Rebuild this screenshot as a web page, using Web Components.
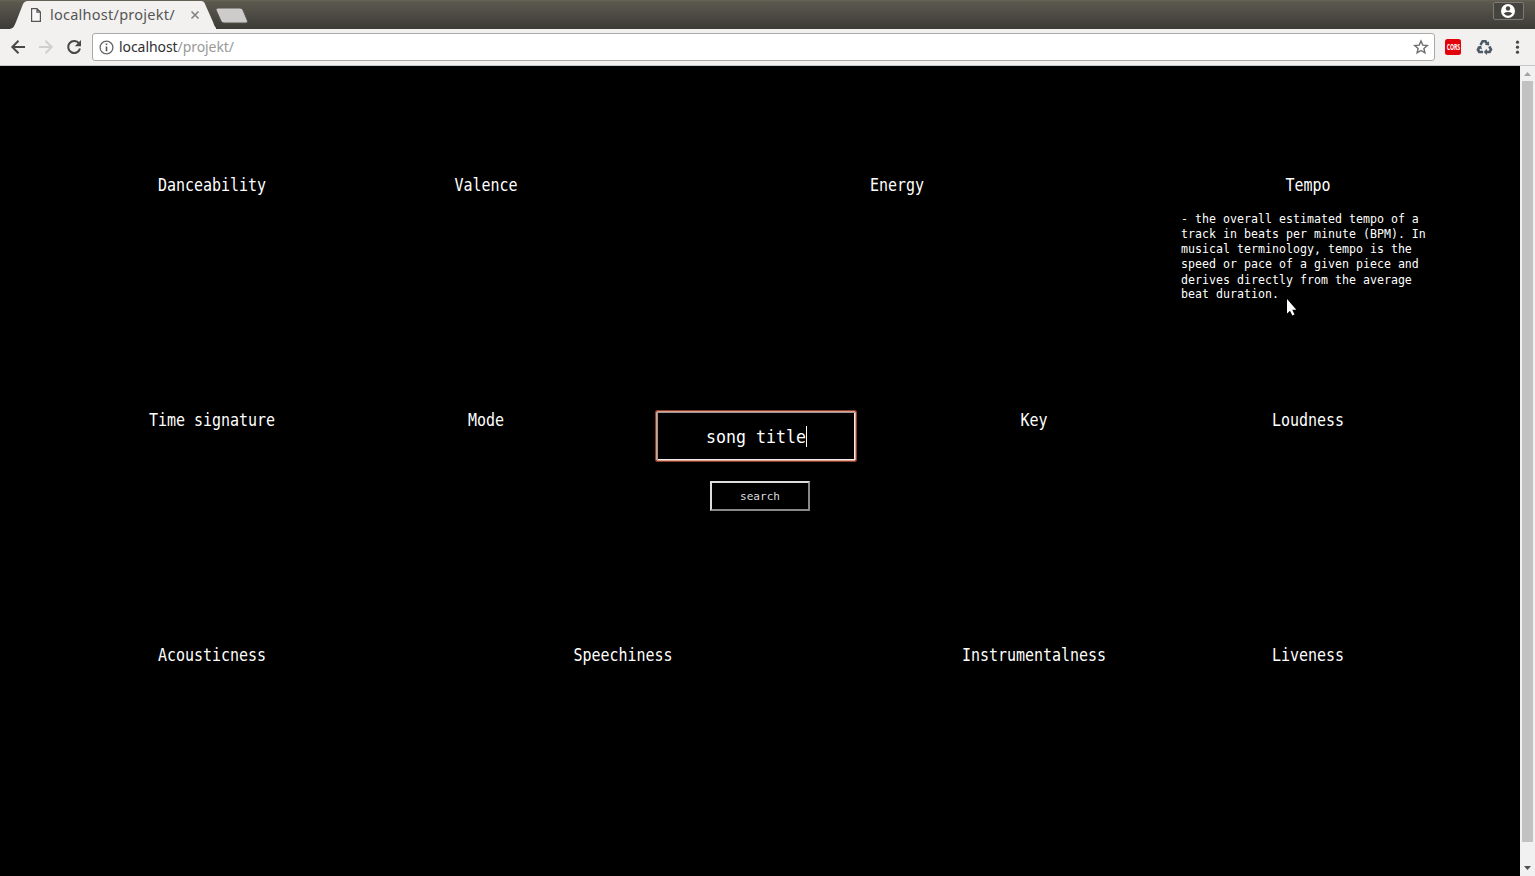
<!DOCTYPE html>
<html lang="en">
<head>
<meta charset="utf-8">
<title>localhost/projekt/</title>
<style>
html,body{margin:0;height:100%;overflow:hidden;background:#000}
</style>
</head>
<body>
<browser-window>
  <tab-strip slot="tabs"><browser-tab>localhost/projekt/</browser-tab></tab-strip>
  <address-bar slot="toolbar" host="localhost" path="/projekt/"></address-bar>
  <feature-grid>
    <track-feature>Danceability</track-feature>
    <track-feature>Valence</track-feature>
    <track-feature span="2">Energy</track-feature>
    <track-feature>Tempo<span slot="info">- the overall estimated tempo of a track in beats per minute (BPM). In musical terminology, tempo is the speed or pace of a given piece and derives directly from the average beat duration.</span></track-feature>
    <track-feature>Time signature</track-feature>
    <track-feature>Mode</track-feature>
    <song-search></song-search>
    <track-feature>Key</track-feature>
    <track-feature>Loudness</track-feature>
    <track-feature>Acousticness</track-feature>
    <track-feature span="2">Speechiness</track-feature>
    <track-feature>Instrumentalness</track-feature>
    <track-feature>Liveness</track-feature>
  </feature-grid>
</browser-window>
<mouse-pointer></mouse-pointer>
<script>
const define = (name, html, setup) => customElements.define(name, class extends HTMLElement {
  constructor() {
    super();
    this.attachShadow({mode: "open"}).innerHTML = html;
  }
  connectedCallback() { if (setup) setup(this, this.shadowRoot); }
});

define("browser-window", `<style>
:host{display:flex;flex-direction:column;height:876px;width:1535px;font-family:"Noto Sans",sans-serif}
.view{display:flex;flex:1;min-height:0;background:#000}
slot:not([name]){display:block;flex:1}
</style>
<slot name="tabs"></slot><slot name="toolbar"></slot>
<div class="view"><slot></slot><scroll-bar></scroll-bar></div>`);

define("tab-strip", `<style>
:host{display:flex;height:29px;background:linear-gradient(#676455 0,#5b584e 2px,#57544b 6px,#3d3c37 28px);align-items:flex-start}
.new{margin:8px 0 0 -1px}
.user{margin:2px 11px 0 auto;width:28px;padding-right:1px;height:16px;border:1px solid #7c7a72;border-radius:2px;background:#46443e;display:flex;justify-content:center;align-items:center}
svg{display:block}
</style>
<slot></slot>
<svg class="new" width="34" height="16"><path d="M3 0H25Q27 0 28 2L32.500 13Q33 15 31 15H9Q7 15 6 13L1 2Q.500 0 3 0Z" fill="#ceccca" stroke="#55534b"/></svg>
<div class="user"><svg width="16" height="14" viewBox="0 0 16 14"><circle cx="8" cy="7" r="7" fill="#fff"/><circle cx="8" cy="4.500" r="2.200" fill="#46443e"/><path d="M3.700 9.200Q8 6.700 12.300 9.200Q8 14.200 3.700 9.200" fill="#46443e"/></svg></div>`);

define("browser-tab", `<style>
:host{display:grid;width:216px;height:29px;flex:none}
.shape,.row{grid-area:1/1}
.row{display:flex;align-items:center;padding:1px 16px 0 31px}
.label{font-size:14.500px;line-height:20px;color:#555;margin:-2px 0 0 9px;width:125px;white-space:nowrap;letter-spacing:.25px}
.close{margin-left:auto}
</style>
<svg class="shape" width="216" height="29"><path d="M10 29C14 28 14 26 16 22L23 4Q24.500 1 28 1H201Q204 1 205 4L213 22C215 27 215 28 219 29Z" fill="#f2f1f0"/></svg>
<div class="row">
<svg width="10" height="14" viewBox="0 0 10 14"><path d="M.6 .6H6L9.400 4V13.400H.6ZM6 .6V4.200H9.400" fill="#f7f7f7" stroke="#555" stroke-width="1.200"/></svg>
<span class="label"><slot></slot></span>
<svg class="close" width="10" height="10"><path d="M1.500 1.500L8.500 8.500M8.500 1.500L1.500 8.500" stroke="#858585" stroke-width="1.700"/></svg>
</div>`);

define("address-bar", `<style>
:host{display:flex;align-items:center;height:36px;background:#f2f1f0;border-bottom:1px solid #c9c7c5;box-sizing:content-box}
svg{display:block;flex:none}
.nav{display:flex;align-items:center;gap:12px;padding-left:10px;width:92px;box-sizing:border-box;height:36px;flex:none}
.field{display:flex;align-items:center;box-sizing:border-box;width:1343px;height:28px;border:1px solid #aaa9a8;border-radius:3px;background:#fff;padding:0 5px 0 6px;flex:none}
.url{font-size:14px;line-height:20px;margin-left:5px;letter-spacing:-.07px;color:#303030;flex:1}
.path{color:#999}
.tools{display:flex;align-items:center;margin-left:10px}
.cors{width:16px;height:16px;border-radius:2.500px;background:#e2000b;color:#fff;display:flex;align-items:center;justify-content:center;font:bold 8px/16px "Open Sans",sans-serif}
.cors span{display:block;transform:scale(.64,1.05);letter-spacing:-.1px}
.re{margin-left:15px}.menu{margin-left:22px}
</style>
<div class="nav">
<svg width="16" height="16" viewBox="0 0 16 16"><path d="M15 8H2.500M8.500 1.800L2.300 8L8.500 14.200" fill="none" stroke="#484848" stroke-width="2"/></svg>
<svg width="16" height="16" viewBox="0 0 16 16"><path d="M1 8H13.500M7.500 1.800L13.700 8L7.500 14.200" fill="none" stroke="#d0cfce" stroke-width="2"/></svg>
<svg width="16" height="16" viewBox="0 0 16 16"><path d="M13.100 4.500A6 6 0 1 0 14 9.500" fill="none" stroke="#484848" stroke-width="2"/><path d="M15 1V7.200H8.800Z" fill="#484848"/></svg>
</div>
<div class="field">
<svg width="15" height="15" viewBox="0 0 15 15"><circle cx="7.500" cy="7.500" r="6.400" fill="none" stroke="#666" stroke-width="1.300"/><path d="M7.500 3.500V5.100M7.500 6.400V11.300" stroke="#555" stroke-width="1.600"/></svg>
<span class="url"><span class="host"></span><span class="path"></span></span>
<svg width="16" height="16" viewBox="0 0 16 16"><path d="M8 2L9.800 6.100L14.300 6.500L10.900 9.400L11.900 13.800L8 11.500L4.100 13.800L5.100 9.400L1.700 6.500L6.200 6.100Z" fill="none" stroke="#6c6c6c" stroke-width="1.400"/></svg>
</div>
<div class="tools">
<div class="cors"><span>CORS</span></div>
<svg class="re" width="17" height="16" viewBox="0 0 17 16"><g fill="none" stroke="#4d5966" stroke-width="2.600"><path d="M4.500 5.800L6.600 2.200H9.500L11 4.600"/><path d="M13.300 7.500L15 10.600L13.600 13H10.500"/><path d="M7 13H3.200L1.900 10.700L3.600 8"/></g><path d="M8.800 5.700L13.200 6.400L13 2.300ZM11 9.800V16L7.700 13ZM1 8.100L5.100 6.400L6 10.600Z" fill="#4d5966"/></svg>
<svg class="menu" width="5" height="14"><g fill="#484848"><circle cx="2.500" cy="2.200" r="1.600"/><circle cx="2.500" cy="7.200" r="1.600"/><circle cx="2.500" cy="12.200" r="1.600"/></g></svg>
</div>`, (el, root) => {
  root.querySelector(".host").textContent = el.getAttribute("host");
  root.querySelector(".path").textContent = el.getAttribute("path");
});

define("scroll-bar", `<style>
:host{display:flex;flex-direction:column;align-items:center;width:15px;background:#f1f1f1}
svg{display:block;flex:none}
.thumb{width:11px;height:761px;background:#c1c1c1}
</style>
<svg width="15" height="15"><path d="M4 10L7.500 6L11 10Z" fill="#a3a3a3"/></svg>
<div class="thumb"></div>
<svg width="15" height="34"><path d="M4 24H11L7.500 28Z" fill="#505050"/></svg>`);

define("feature-grid", `<style>
:host{display:grid;grid-template-columns:repeat(5,274px);grid-auto-rows:235px;padding:105px 75px 0;box-sizing:border-box;width:1520px;color:#fff;font-family:"DejaVu Sans Mono",monospace}
</style><slot></slot>`);

define("track-feature", `<style>
:host{display:block;text-align:center}
:host([span="2"]){grid-column:span 2}
h2{font-size:15px;font-weight:400;letter-spacing:-.03px;line-height:28px;margin:0;transform:scaleY(1.12)}
p{font-size:11.600px;line-height:13.636px;letter-spacing:.016px;margin:13px auto 0;width:254px;text-align:left;transform:scaleY(1.1);transform-origin:0 0}
</style><h2><slot></slot></h2><p><slot name="info"></slot></p>`);

define("song-search", `<style>
:host{display:flex;flex-direction:column;align-items:center;padding-top:5px}
.field{display:flex;align-items:center;justify-content:center;box-sizing:border-box;width:200px;height:50px;margin-right:8px;border:1px solid #e59a85;outline:1px solid #8a3f2c;border-radius:1px;box-shadow:inset 1px 1px #9a9a9a,inset -1px -1px #eee;font-size:16.600px;letter-spacing:.006px;padding-top:2px}
.field span{transform:scaleY(1.05)}
.caret{width:1px;height:21px;background:#fff;margin:-1px -1px 0 0}
button{width:100px;height:30px;margin:20px 0 0;padding:0;background:#000;color:#ddd;border:2px solid;border-color:#ddd #888 #888 #ddd;font:11.070px "DejaVu Sans Mono",monospace}
</style>
<div class="field" role="textbox"><span>song title</span><i class="caret"></i></div>
<button>search</button>`);

define("mouse-pointer", `<style>
:host{position:absolute;left:1286px;top:298px}
svg{display:block}
</style><svg width="12" height="20"><path d="M1 1V15.500L4 12.700L6.300 17.600L8.500 16.600L6.200 11.800H10.300Z" fill="#fff"/></svg>`);
</script>
</body>
</html>
